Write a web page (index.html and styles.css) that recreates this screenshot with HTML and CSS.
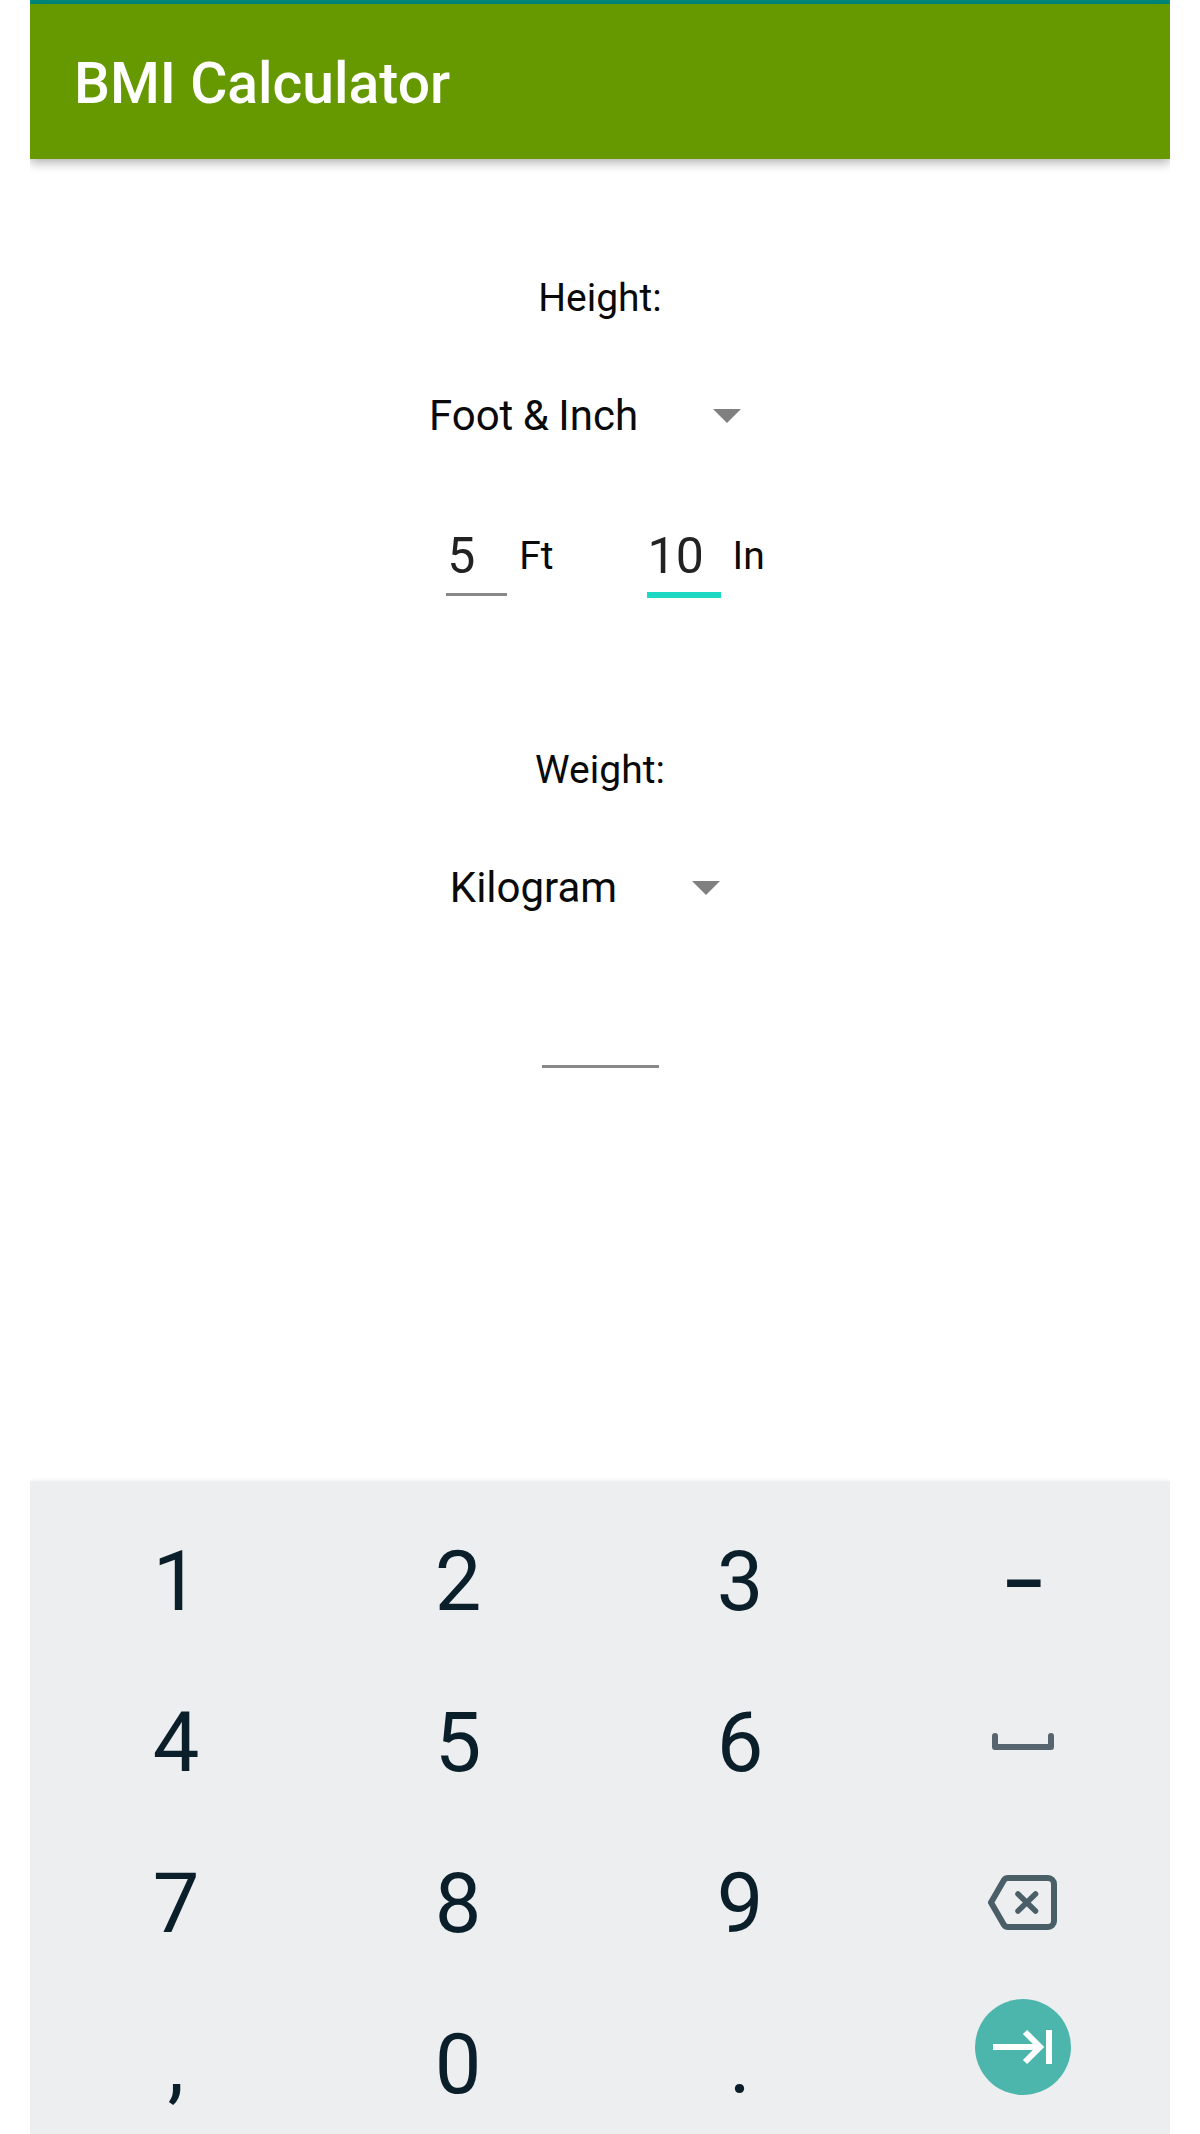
FILE: index.html
```html
<!DOCTYPE html>
<html lang="en">
<head>
    <meta charset="UTF-8">
    <meta name="viewport" content="width=device-width, initial-scale=1.0">
    <title>BMI Calculator</title>
    <link rel="stylesheet" href="styles.css">
</head>
<body>
    <div class="screen">
        <div class="status-strip"></div>
        <header class="app-bar">
            <h1>BMI Calculator</h1>
        </header>
        <main class="form">
            <div class="label">Height:</div>
            <div class="spinner">
                <span>Foot &amp; Inch</span>
                <span class="arrow"></span>
            </div>
            <div class="fields">
                <span class="field field-ft">5</span>
                <span class="unit">Ft</span>
                <span class="field field-in">10</span>
                <span class="unit">In</span>
            </div>
            <div class="label label-weight">Weight:</div>
            <div class="spinner">
                <span>Kilogram</span>
                <span class="arrow"></span>
            </div>
            <div class="weight-input"></div>
        </main>
        <!-- numeric keyboard -->
        <section class="keyboard">
            <div class="key">1</div>
            <div class="key">2</div>
            <div class="key">3</div>
            <div class="key key-minus">–</div>
            <div class="key">4</div>
            <div class="key">5</div>
            <div class="key">6</div>
            <div class="key key-icon">
                <svg width="62" height="17" viewBox="0 0 62 17"><path d="M3 3V14H59V3" fill="none" stroke="#566570" stroke-width="6" stroke-linecap="round" stroke-linejoin="round"/></svg>
            </div>
            <div class="key">7</div>
            <div class="key">8</div>
            <div class="key">9</div>
            <div class="key key-icon">
                <svg width="70" height="55" viewBox="0 0 70 55"><path d="M20 3H60a6 6 0 0 1 6 6V46a6 6 0 0 1-6 6H20a5 5 0 0 1-4-2L3 27.500 16 5a5 5 0 0 1 4-2z" fill="none" stroke="#4a5e68" stroke-width="6" stroke-linejoin="round"/><path d="M30 19L47.500 36M47.500 19L30 36" fill="none" stroke="#4a5e68" stroke-width="5.500" stroke-linecap="round"/></svg>
            </div>
            <div class="key">,</div>
            <div class="key">0</div>
            <div class="key">.</div>
            <div class="key key-icon">
                <div class="next-btn">
                    <svg width="96" height="96" viewBox="0 0 96 96"><path d="M18 48H65M50 33L65 48 50 63M74 31V65" fill="none" stroke="#fff" stroke-width="6"/></svg>
                </div>
            </div>
        </section>
    </div>
</body>
</html>
```

FILE: styles.css
```css
body {
    margin: 0;
    background-color: #fff;
    font-family: Roboto, "Noto Sans", sans-serif;
    color: #0a0a0a;
}

.screen {
    margin: 0 30px;
    height: 2134px;
    display: flex;
    flex-direction: column;
    overflow: hidden;
}

.status-strip {
    height: 4px;
    background-color: #00897b;
}

.app-bar {
    height: 155px;
    box-sizing: border-box;
    padding: 4px 0 0 44px;
    background-color: #669900;
    box-shadow: 0 4px 10px rgba(0, 0, 0, 0.3);
    display: flex;
    align-items: center;
    position: relative;
}

.app-bar h1 {
    margin: 0;
    font-size: 57px;
    font-weight: 500;
    color: #fff;
}

.form {
    flex: 1;
    display: flex;
    flex-direction: column;
    align-items: center;
    padding-top: 114px;
}

.label {
    font-size: 39px;
    line-height: 50px;
}

.label-weight {
    margin-top: 147px;
}

.spinner {
    display: flex;
    align-items: center;
    margin-top: 63px;
    padding-right: 30px;
    font-size: 42px;
    line-height: 60px;
    word-spacing: -1px;
}

.arrow {
    width: 0;
    height: 0;
    margin-left: 75px;
    border-left: 14px solid transparent;
    border-right: 14px solid transparent;
    border-top: 14px solid #808080;
}

.fields {
    display: flex;
    align-items: flex-start;
    margin-top: 80px;
    padding-left: 11px;
}

.field {
    font-size: 50px;
    line-height: 60px;
    color: #222;
    padding-left: 1px;
    box-sizing: border-box;
}

.field-ft {
    width: 61px;
    padding-bottom: 7px;
    border-bottom: 3px solid #888;
}

.field-in {
    width: 74px;
    padding-bottom: 6px;
    border-bottom: 6px solid #1dd9c4;
}

.unit {
    font-size: 39px;
    line-height: 60px;
    margin-left: 12px;
    margin-right: 93px;
}

.unit:last-child {
    margin-right: 0;
}

.weight-input {
    width: 117px;
    height: 3px;
    margin-top: 147px;
    background-color: #888;
}

.keyboard {
    height: 652px;
    box-sizing: border-box;
    padding: 19px 7px 0 5px;
    background-color: #eceef0;
    box-shadow: 0 -1px 4px rgba(0, 0, 0, 0.1);
    display: grid;
    grid-template-columns: repeat(4, 1fr);
    grid-auto-rows: 161px;
    font-size: 83px;
    color: #0a1f2a;
}

.key {
    display: flex;
    align-items: center;
    justify-content: center;
    line-height: 161px;
}

.key-icon {
    padding: 0 0 2px 2px;
}

.key-minus {
    font-size: 66px;
    font-weight: 700;
    padding: 5px 0 0 2px;
}

.next-btn {
    width: 96px;
    height: 96px;
    margin-bottom: 34px;
    border-radius: 50%;
    background-color: #4db6ac;
    display: flex;
}
```
